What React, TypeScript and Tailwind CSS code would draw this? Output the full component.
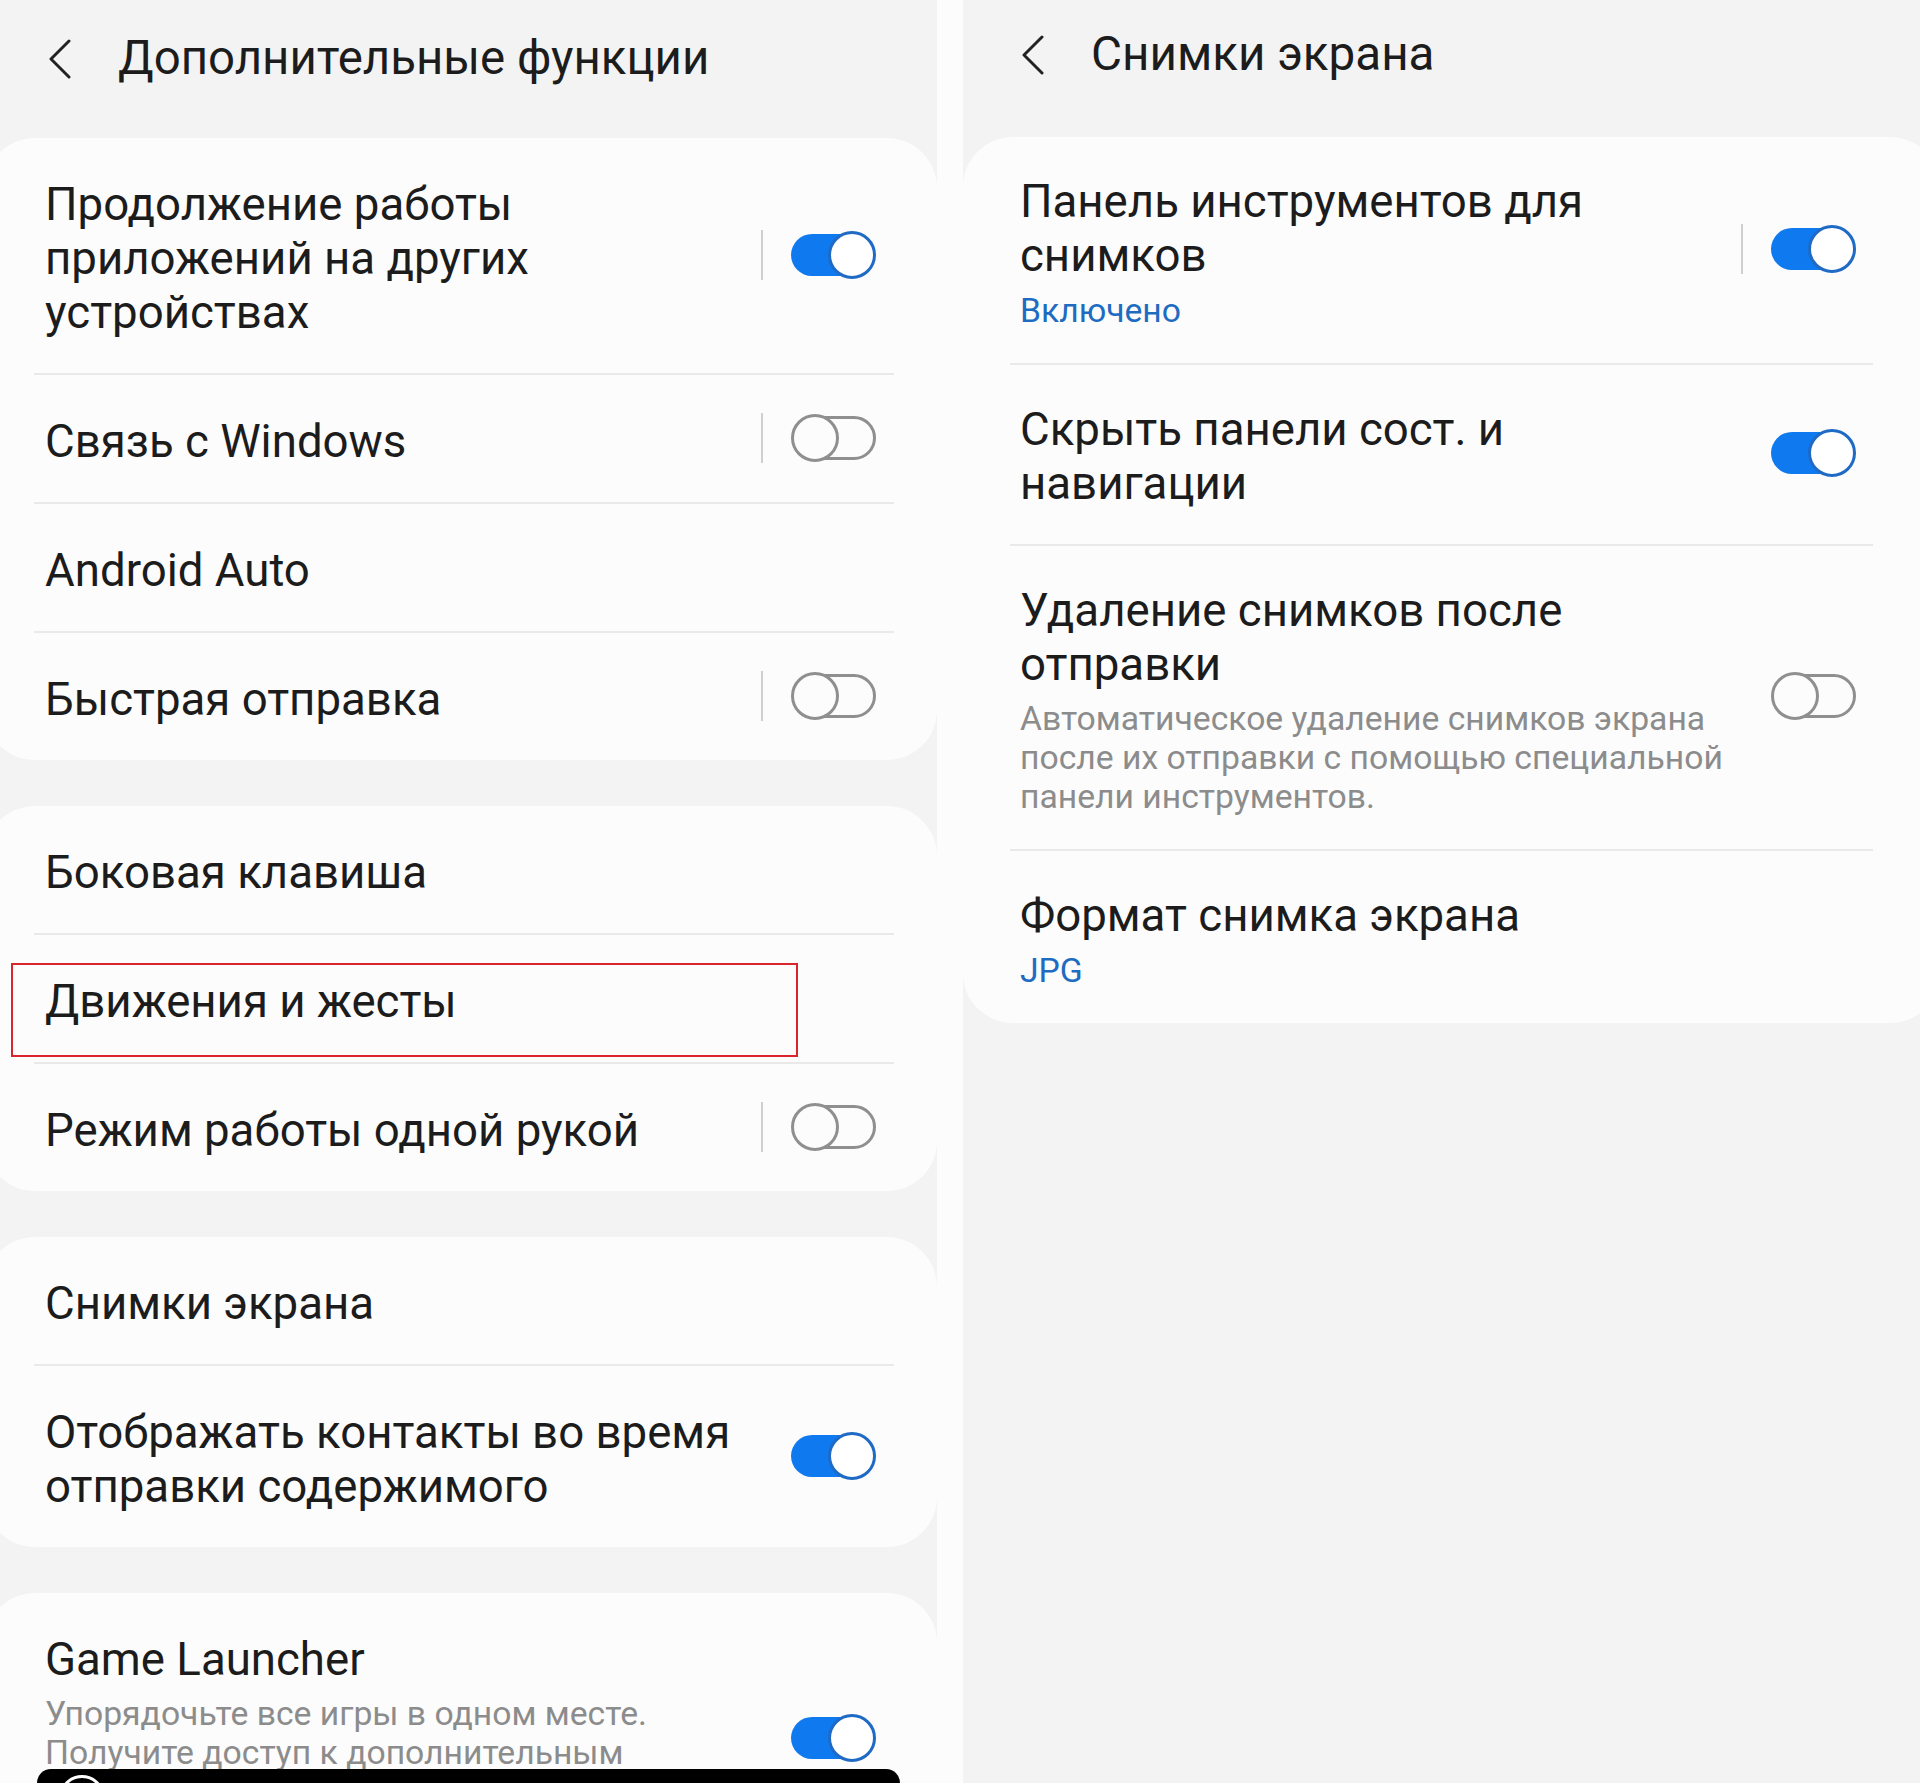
import React from "react";

type Row = {
  lines: string[];
  sub?: string[];
  subBlue?: boolean;
  toggle?: "on" | "off";
  bar?: boolean;
  marked?: boolean;
};

const font = { fontFamily: "Roboto, 'Noto Sans', sans-serif" };

const Toggle = ({ on }: { on: boolean }) =>
  on ? (
    <div className="relative w-[85px] h-[48px] shrink-0">
      <div className="absolute left-0 top-[3px] w-[70px] h-[42px] rounded-full bg-[#0f7af0]" />
      <div className="absolute right-0 top-0 w-[48px] h-[48px] rounded-full bg-white border-[3px] border-[#1f6ac4]" />
    </div>
  ) : (
    <div className="relative w-[85px] h-[48px] shrink-0">
      <div className="absolute right-0 top-[2px] w-[76px] h-[44px] rounded-full border-[3px] border-[#8f8f8f]" />
      <div className="absolute left-0 top-0 w-[48px] h-[48px] rounded-full bg-[#fcfcfc] border-[3px] border-[#8f8f8f]" />
    </div>
  );

const Chevron = () => (
  <svg width="24" height="40" viewBox="0 0 24 40" fill="none">
    <polyline points="21,2 3,20 21,38" stroke="#222" strokeWidth="3" strokeLinecap="round" strokeLinejoin="round" />
  </svg>
);

const Card = ({
  rows,
  left,
  rowPad,
  padText,
  padRight,
  divL,
  divR,
}: {
  rows: Row[];
  left: boolean;
  rowPad: string;
  padText: string;
  padRight: string;
  divL: string;
  divR: string;
}) => (
  <div className={`bg-[#fcfcfc] rounded-[50px] ${left ? "-ml-[15px] w-[952px]" : "w-[977px]"}`}>
    {rows.map((r, i) => (
      <div key={i}>
        {i > 0 && <div className={`h-[2px] bg-[#e9e9e9] ${divL} ${divR}`} />}
        <div className={`relative flex items-center ${rowPad} ${padText} ${padRight}`}>
          {r.marked && (
            <div className="absolute left-[26px] top-[28px] w-[787px] h-[94px] border-2 border-[#d8262c]" />
          )}
          <div className="flex-1">
            {r.lines.map((l, j) => (
              <div key={j} className="text-[45.6px] leading-[54px] text-[#1c1c1c] whitespace-nowrap">
                {l}
              </div>
            ))}
            {r.sub && (
              <div className={r.subBlue ? "mt-[8px]" : "mt-[7px]"}>
                {r.sub.map((s, j) => (
                  <div
                    key={j}
                    className={`text-[33.7px] leading-[39px] whitespace-nowrap ${r.subBlue ? "text-[#1d6cc2]" : "text-[#8c8c8c]"}`}
                  >
                    {s}
                  </div>
                ))}
              </div>
            )}
          </div>
          {r.toggle && (
            <div className="flex items-center -translate-y-[4px]">
              {r.bar && <div className="w-[2px] h-[50px] bg-[#cfcfcf] mr-[28px]" />}
              <Toggle on={r.toggle === "on"} />
            </div>
          )}
        </div>
      </div>
    ))}
  </div>
);

const leftCards: Row[][] = [
  [
    { lines: ["Продолжение работы", "приложений на других", "устройствах"], toggle: "on", bar: true },
    { lines: ["Связь с Windows"], toggle: "off", bar: true },
    { lines: ["Android Auto"] },
    { lines: ["Быстрая отправка"], toggle: "off", bar: true },
  ],
  [
    { lines: ["Боковая клавиша"] },
    { lines: ["Движения и жесты"], marked: true },
    { lines: ["Режим работы одной рукой"], toggle: "off", bar: true },
  ],
  [
    { lines: ["Снимки экрана"] },
    { lines: ["Отображать контакты во время", "отправки содержимого"], toggle: "on" },
  ],
  [
    {
      lines: ["Game Launcher"],
      sub: ["Упорядочьте все игры в одном месте.", "Получите доступ к дополнительным", "функциям и улучшите", "игровой процесс."],
      toggle: "on",
    },
  ],
];

const rightRows: Row[] = [
  { lines: ["Панель инструментов для", "снимков"], sub: ["Включено"], subBlue: true, toggle: "on", bar: true },
  { lines: ["Скрыть панели сост. и", "навигации"], toggle: "on" },
  {
    lines: ["Удаление снимков после", "отправки"],
    sub: ["Автоматическое удаление снимков экрана", "после их отправки с помощью специальной", "панели инструментов."],
    toggle: "off",
  },
  { lines: ["Формат снимка экрана"], sub: ["JPG"], subBlue: true },
];

export default function App() {
  return (
    <div className="w-[1920px] h-[1783px] overflow-hidden flex bg-[#f3f3f3]" style={font}>
      <div className="relative w-[937px] shrink-0 overflow-hidden bg-[#f3f3f3]">
        <div className="h-[138px] flex items-center pb-[20px] pl-[48px]">
          <Chevron />
          <span className="ml-[46px] text-[47.4px] text-[#1c1c1c]">Дополнительные функции</span>
        </div>
        <div className="flex flex-col gap-[46px]">
          {leftCards.map((rows, i) => (
            <Card
              key={i}
              rows={rows}
              left
              rowPad="pt-[40px] pb-[33px]"
              padText="pl-[60px]"
              padRight="pr-[61px]"
              divL="ml-[49px]"
              divR="mr-[43px]"
            />
          ))}
        </div>
        <div className="absolute bottom-0 left-[37px] w-[863px] h-[14px] bg-black rounded-t-[30px] overflow-hidden">
          <div className="ml-[22px] mt-[6px] w-[46px] h-[46px] rounded-full border-[3px] border-white" />
        </div>
      </div>
      <div className="w-[26px] shrink-0 bg-[#fcfcfc]" />
      <div className="flex-1 bg-[#f3f3f3] overflow-hidden">
        <div className="h-[137px] flex items-center pb-[28px] pl-[58px]">
          <Chevron />
          <span className="ml-[46px] text-[47.6px] text-[#1c1c1c]">Снимки экрана</span>
        </div>
        <Card
          rows={rightRows}
          left={false}
          rowPad="pt-[38px] pb-[33px]"
          padText="pl-[57px]"
          padRight="pr-[84px]"
          divL="ml-[47px]"
          divR="mr-[67px]"
        />
      </div>
    </div>
  );
}
